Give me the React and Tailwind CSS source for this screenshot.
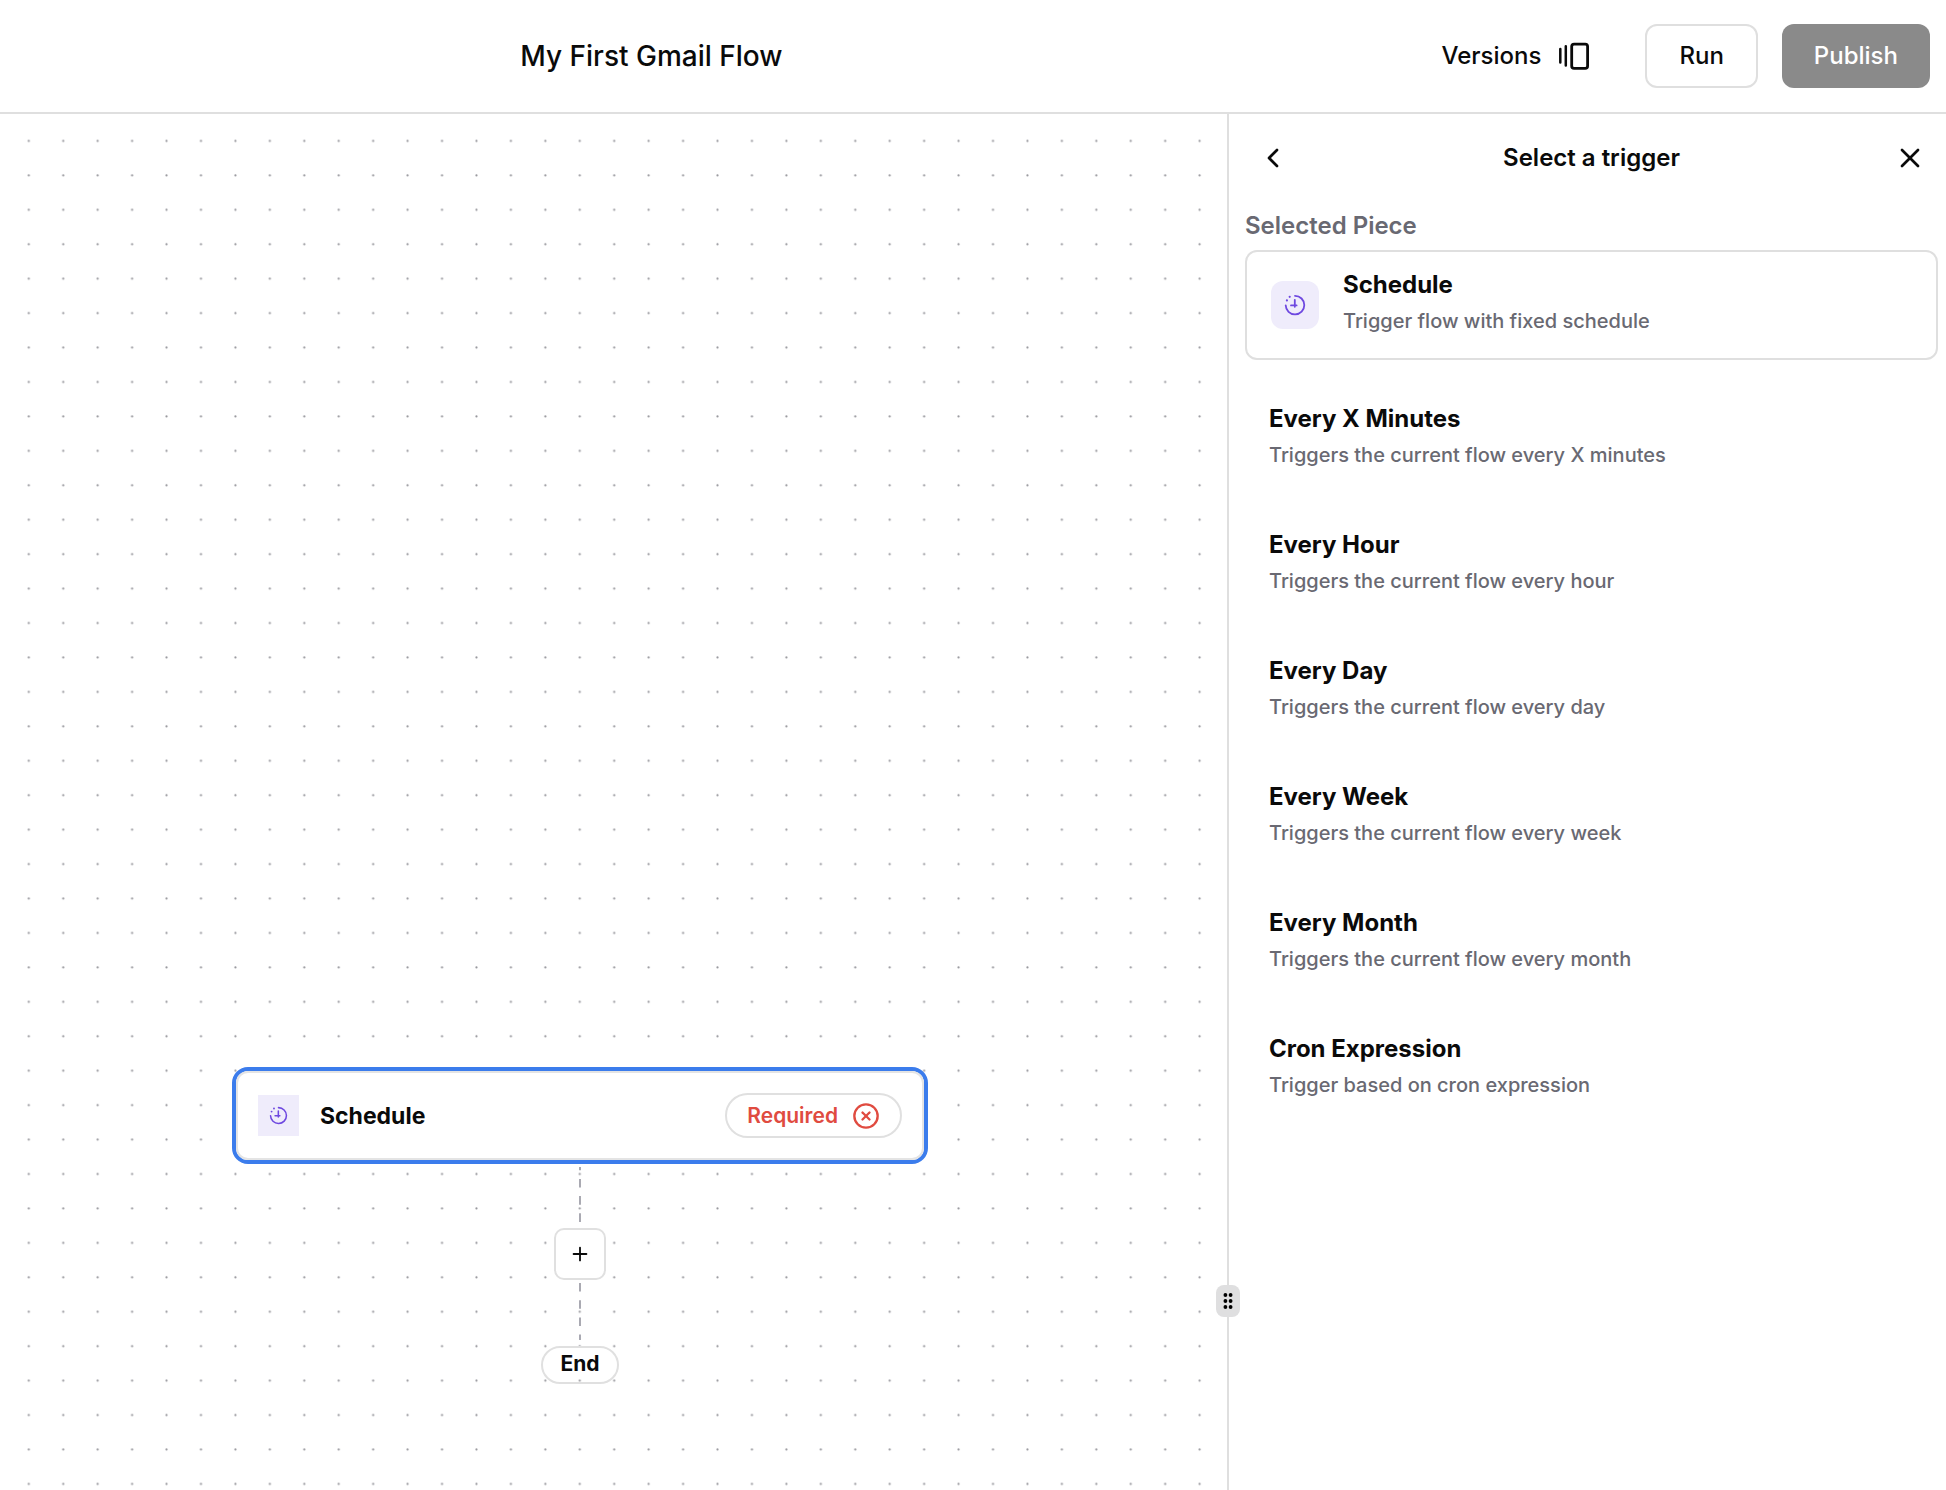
import { useState } from 'react';
import { ChevronLeft, CircleX, Plus, X } from 'lucide-react';

const TRIGGERS = [
  { name: 'Every X Minutes', description: 'Triggers the current flow every X minutes' },
  { name: 'Every Hour', description: 'Triggers the current flow every hour' },
  { name: 'Every Day', description: 'Triggers the current flow every day' },
  { name: 'Every Week', description: 'Triggers the current flow every week' },
  { name: 'Every Month', description: 'Triggers the current flow every month' },
  { name: 'Cron Expression', description: 'Trigger based on cron expression' },
];

// ── Icons ──────────────────────────────────────────────────────────────────
function ScheduleIcon({ className }) {
  return (
    <svg viewBox="0 0 48 48" className={className} fill="none" stroke="#6e48e0" aria-hidden="true">
      <path d="M24 14.8a9.3 9.3 0 1 1-9.3 9.5" strokeWidth="1.8" strokeLinecap="round" />
      <path d="M23.8 18.8v7M20 24.4h5.6" strokeWidth="1.8" strokeLinecap="round" />
      <g fill="#6e48e0" stroke="none">
        <circle cx="18.7" cy="15.8" r="1.1" />
        <circle cx="15.9" cy="19.4" r="1.1" />
      </g>
    </svg>
  );
}

function VersionsIcon() {
  return (
    <svg viewBox="0 0 32 32" className="size-8" fill="none" stroke="currentColor" aria-hidden="true">
      <path d="M3.3 9v13.6M8.8 6.2v19.4" strokeWidth="2.5" strokeLinecap="round" />
      <rect x="14.7" y="4.1" width="15.9" height="24.2" rx="2.4" strokeWidth="2.8" />
    </svg>
  );
}

// ── Header ─────────────────────────────────────────────────────────────────
function Header() {
  return (
    <header className="grid grid-cols-[2fr_1fr] items-center h-[114px] pl-3 pr-4 border-b-2 border-[#dfdfdf] bg-white flex-shrink-0">
      <h1 className="text-center text-[28px] leading-9 font-medium">My First Gmail Flow</h1>
      <div className="flex items-center justify-end gap-6">
        <button className="flex items-center gap-4 h-16 px-8 text-[24px] leading-8 font-medium">
          Versions
          <VersionsIcon />
        </button>
        <button className="h-16 px-8 rounded-xl border-2 border-[#dfdfdf] text-[24px] leading-8 font-medium">
          Run
        </button>
        <button className="h-16 px-8 rounded-xl bg-[#8a8a8a] text-white text-[24px] leading-8 font-medium">
          Publish
        </button>
      </div>
    </header>
  );
}

// ── Canvas ─────────────────────────────────────────────────────────────────
function DotGrid() {
  return (
    <svg className="absolute inset-0 size-full" aria-hidden="true">
      <pattern id="dots" x="11.6" y="9.8" width="34.436" height="34.436" patternUnits="userSpaceOnUse">
        <circle cx="17.2" cy="17.2" r="1.1" fill="#97979c" />
      </pattern>
      <rect width="100%" height="100%" fill="url(#dots)" />
    </svg>
  );
}

function Connector({ offset }) {
  return (
    <svg width="4" height="64" viewBox="0 0 4 64" aria-hidden="true">
      <path d="M2 3v57" stroke="#a1a1aa" strokeWidth="1.8" strokeDasharray="8.6" strokeDashoffset={offset} />
    </svg>
  );
}

function Canvas() {
  return (
    <main className="relative flex-1 overflow-hidden">
      <DotGrid />
      <div className="absolute left-[232px] top-[953px] w-[696px] flex flex-col items-center">
        <div className="w-full rounded-2xl border-4 border-[#3b7cec] bg-white">
          <div className="flex items-center gap-[21px] h-[89px] px-5 rounded-xl border-2 border-[#e4e4e4] bg-white">
            <ScheduleIcon className="size-[41px] bg-[#efecfb]" />
            <span className="flex-1 text-[23px] leading-8 font-bold">Schedule</span>
            <span className="flex items-center gap-3.5 h-[45px] px-5 rounded-full border-2 border-[#e0e0e0] text-[#e04b40] text-[21px] leading-8 font-semibold">
              Required
              <CircleX size={28} strokeWidth={2} />
            </span>
          </div>
        </div>
        <Connector offset={5.3} />
        <button aria-label="Add step" className="flex items-center justify-center size-[52px] rounded-[10px] border-2 border-[#e0e0e0] bg-white">
          <Plus size={22} strokeWidth={2} />
        </button>
        <Connector offset={0} />
        <div className="h-[38px] px-[17px] mt-0.5 rounded-full border-2 border-[#e0e0e0] text-[21px] leading-8 font-bold">
          End
        </div>
      </div>
    </main>
  );
}

// ── Trigger panel ──────────────────────────────────────────────────────────
function ResizeHandle() {
  return (
    <button
      aria-label="Resize panel"
      className="absolute -left-[13px] bottom-[173px] flex items-center justify-center w-6 h-8 rounded-lg bg-[#dfdfe0]"
    >
      <svg width="12" height="18" viewBox="0 0 12 18" aria-hidden="true">
        {[3, 9, 15].map(y => (
          <g key={y}>
            <circle cx="3.4" cy={y} r="1.9" />
            <circle cx="8.6" cy={y} r="1.9" />
          </g>
        ))}
      </svg>
    </button>
  );
}

function PieceText({ name, description }) {
  return (
    <span className="flex flex-col gap-1 text-left">
      <span className="text-[24px] leading-8 font-bold">{name}</span>
      <span className="text-[20px] leading-8 font-medium text-[#696972]">{description}</span>
    </span>
  );
}

function TriggerPanel() {
  const [selected, setSelected] = useState(null);

  return (
    <aside className="relative w-[36.95%] border-l-2 border-[#dfdfdf] bg-white pl-4 pr-2 pt-4">
      <ResizeHandle />
      <div className="flex items-center justify-between">
        <button aria-label="Back" className="flex items-center justify-center size-14">
          <ChevronLeft size={32} />
        </button>
        <h2 className="text-[24px] leading-8 font-semibold">Select a trigger</h2>
        <button aria-label="Close" className="flex items-center justify-center size-14">
          <X size={32} />
        </button>
      </div>
      <h3 className="mt-6 text-[24px] leading-8 font-semibold text-[#696972]">Selected Piece</h3>
      <div className="flex items-center gap-6 h-[110px] mt-2 px-6 rounded-xl border-2 border-[#dfdfdf]">
        <ScheduleIcon className="size-12 rounded-xl bg-[#efecfb]" />
        <div className="self-start pt-[17px]">
          <PieceText name="Schedule" description="Trigger flow with fixed schedule" />
        </div>
      </div>
      <ul className="mt-3.5">
        {TRIGGERS.map(t => (
          <li key={t.name}>
            <button
              aria-pressed={selected === t.name}
              onClick={() => setSelected(t.name)}
              className="block w-full px-6 py-[29px]"
            >
              <PieceText name={t.name} description={t.description} />
            </button>
          </li>
        ))}
      </ul>
    </aside>
  );
}

export default function App() {
  return (
    <div className="flex flex-col min-h-screen bg-white text-[#0a0a0a] font-['Inter',sans-serif]">
      <Header />
      <div className="flex flex-1">
        <Canvas />
        <TriggerPanel />
      </div>
    </div>
  );
}
